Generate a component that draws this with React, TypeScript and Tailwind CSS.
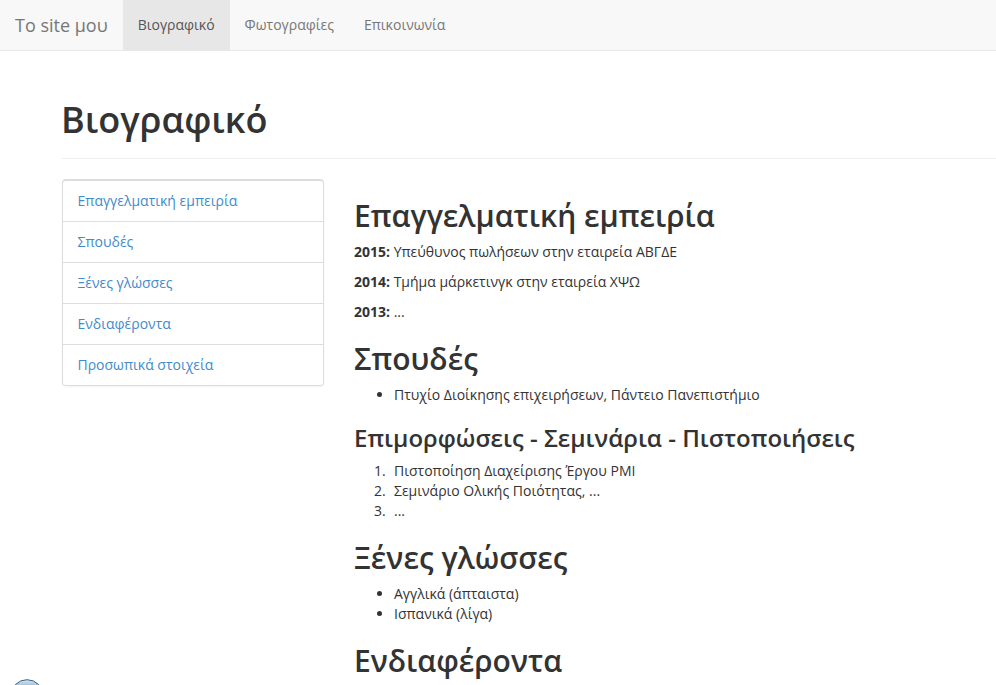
import React from "react";

const navItems = ["Βιογραφικό", "Φωτογραφίες", "Επικοινωνία"];
const sections = ["Επαγγελματική εμπειρία", "Σπουδές", "Ξένες γλώσσες", "Ενδιαφέροντα", "Προσωπικά στοιχεία"];
const jobs = [
  ["2015:", "Υπεύθυνος πωλήσεων στην εταιρεία ΑΒΓΔΕ"],
  ["2014:", "Τμήμα μάρκετινγκ στην εταιρεία ΧΨΩ"],
  ["2013:", "..."],
];
const trainings = ["Πιστοποίηση Διαχείρισης Έργου PMI", "Σεμινάριο Ολικής Ποιότητας, ...", "..."];

function H2({ children }: { children: React.ReactNode }) {
  return <h2 className="mt-5 mb-2.5 text-[30px] leading-[33px] font-semibold">{children}</h2>;
}

export default function App() {
  return (
    <div className="relative h-[685px] w-[996px] overflow-hidden bg-white font-['Open_Sans',sans-serif] text-[14px] leading-5 text-[#333]">
      <nav className="flex h-[51px] border-b border-[#e7e7e7] bg-[#f8f8f8] text-[#777]">
        <a className="px-[15px] py-[15px] text-[18px] leading-5">Το site μου</a>
        {navItems.map((n, i) => (
          <a key={n} className={i === 0 ? "bg-[#e7e7e7] p-[15px] text-[#555]" : "p-[15px]"}>{n}</a>
        ))}
      </nav>
      <main className="pl-[62px] pt-[49px]">
        <header className="border-b border-[#eee] pb-[18px]">
          <h1 className="-ml-px text-[36px] leading-10 font-semibold">Βιογραφικό</h1>
        </header>
        <div className="mt-5 flex items-start">
          <ul className="w-[262px] shrink-0 divide-y divide-[#ddd] rounded-[4px] border border-t-2 border-[#ddd] shadow-[0_1px_2px_rgba(0,0,0,0.05)]">
            {sections.map((s) => (
              <li key={s} className="h-[41px] py-[10px] pr-[15px] pl-[14.5px] text-[#428bca] last:h-10">{s}</li>
            ))}
          </ul>
          <div className="ml-[30px] w-[700px] shrink-0">
            <H2>Επαγγελματική εμπειρία</H2>
            {jobs.map(([y, t]) => (
              <p key={y} className="mb-2.5"><b>{y}</b> {t}</p>
            ))}
            <H2>Σπουδές</H2>
            <ul className="mb-2.5 list-disc pl-10">
              <li>Πτυχίο Διοίκησης επιχειρήσεων, Πάντειο Πανεπιστήμιο</li>
            </ul>
            <h3 className="mt-5 mb-2.5 text-[24px] leading-[26px] font-semibold">Επιμορφώσεις - Σεμινάρια - Πιστοποιήσεις</h3>
            <ol className="mb-2.5 pl-5">
              {trainings.map((t, i) => (
                <li key={t} className="flex"><span className="w-5">{i + 1}.</span>{t}</li>
              ))}
            </ol>
            <H2>Ξένες γλώσσες</H2>
            <ul className="mb-2.5 list-disc pl-10">
              <li>Αγγλικά (άπταιστα)</li>
              <li>Ισπανικά (λίγα)</li>
            </ul>
            <H2>Ενδιαφέροντα</H2>
          </div>
        </div>
      </main>
      <svg className="absolute bottom-0 left-[10px]" width="34" height="6" viewBox="0 0 34 6">
        <defs>
          <linearGradient id="orb" x1="0" y1="0" x2="0" y2="0.2">
            <stop offset="0" stopColor="#dde6ee" />
            <stop offset="1" stopColor="#9dbbd3" />
          </linearGradient>
        </defs>
        <circle cx="17" cy="17" r="16.3" fill="url(#orb)" stroke="#2f6389" />
      </svg>
    </div>
  );
}
